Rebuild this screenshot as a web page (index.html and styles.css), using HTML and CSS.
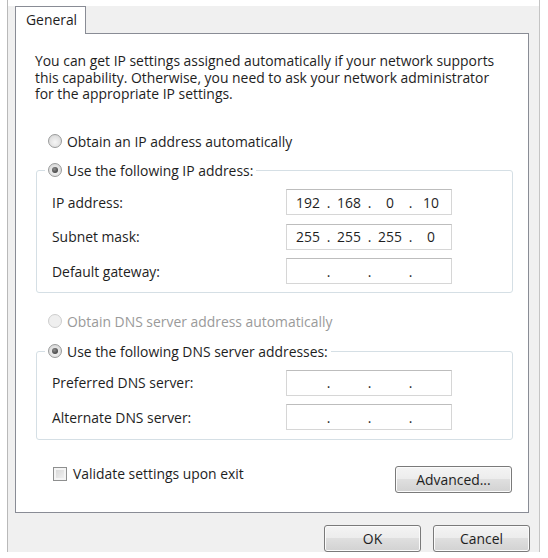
FILE: index.html
```html
<!DOCTYPE html>
<html lang="en">
<head>
    <meta charset="UTF-8">
    <meta name="viewport" content="width=device-width, initial-scale=1.0">
    <title>Internet Protocol Version 4 (TCP/IPv4) Properties</title>
    <link rel="stylesheet" href="styles.css">
</head>
<body>

    <div class="window">
        <div class="tabs">
            <div class="tab">General</div>
        </div>

        <div class="panel">
            <p class="intro">You can get IP settings assigned automatically if your network supports<br>this capability. Otherwise, you need to ask your network administrator<br>for the appropriate IP settings.</p>

            <label class="option outside"><input type="radio" name="ip" class="radio"><span>Obtain an IP address automatically</span></label>

            <fieldset class="group firstGroup">
                <legend><label class="option"><input type="radio" name="ip" class="radio" checked><span>Use the following IP address:</span></label></legend>
                <div class="row">
                    <span class="rowLabel">IP address:</span>
                    <div class="ipBox"><span>192</span><i>.</i><span>168</span><i>.</i><span>0</span><i>.</i><span>10</span></div>
                </div>
                <div class="row">
                    <span class="rowLabel">Subnet mask:</span>
                    <div class="ipBox"><span>255</span><i>.</i><span>255</span><i>.</i><span>255</span><i>.</i><span>0</span></div>
                </div>
                <div class="row">
                    <span class="rowLabel">Default gateway:</span>
                    <div class="ipBox"><span></span><i>.</i><span></span><i>.</i><span></span><i>.</i><span></span></div>
                </div>
            </fieldset>

            <label class="option outside disabledOption"><input type="radio" name="dns" class="radio" disabled><span>Obtain DNS server address automatically</span></label>

            <fieldset class="group secondGroup">
                <legend><label class="option"><input type="radio" name="dns" class="radio" checked><span>Use the following DNS server addresses:</span></label></legend>
                <div class="row">
                    <span class="rowLabel">Preferred DNS server:</span>
                    <div class="ipBox"><span></span><i>.</i><span></span><i>.</i><span></span><i>.</i><span></span></div>
                </div>
                <div class="row">
                    <span class="rowLabel">Alternate DNS server:</span>
                    <div class="ipBox"><span></span><i>.</i><span></span><i>.</i><span></span><i>.</i><span></span></div>
                </div>
            </fieldset>

            <div class="bottomRow">
                <label class="checkLabel"><input type="checkbox" class="checkbox"><span>Validate settings upon exit</span></label>
                <button type="button" class="button advancedButton">Advanced...</button>
            </div>
        </div>

        <div class="footer">
            <button type="button" class="button">OK</button>
            <button type="button" class="button">Cancel</button>
        </div>
    </div>

</body>
</html>
```

FILE: styles.css
```css
body {
    margin: 0;
    background-color: #fff;
    font-family: "Open Sans", "Noto Sans", sans-serif;
    font-size: 13.9px;
    color: #1e1e1e;
}

.window {
    width: 533px;
    height: 552px;
    margin-left: 7px;
    padding-top: 6px;
    box-sizing: border-box;
    border-left: 1px solid #b9b9b9;
    border-right: 1px solid #c4c4c4;
    background: linear-gradient(#fff 6px, #f0f0f0 6px);
}

.tabs {
    height: 27px;
    padding-left: 7px;
}

.tab {
    position: relative;
    z-index: 1;
    width: 71px;
    height: 28px;
    box-sizing: border-box;
    padding-left: 10px;
    line-height: 26px;
    background-color: #fff;
    border: 1px solid #898c95;
    border-bottom: none;
}

.panel {
    width: 514px;
    height: 480px;
    margin-left: 7px;
    padding: 19px 15px 0 19px;
    box-sizing: border-box;
    background-color: #fff;
    border: 1px solid #898c95;
}

.intro {
    margin: 0;
    line-height: 16.5px;
    white-space: nowrap;
}

/* radio + text */
.option {
    display: flex;
    align-items: center;
    gap: 5px;
    height: 19px;
    line-height: 19px;
    white-space: nowrap;
}

.outside {
    margin: 29px 0 0 13px;
}

.disabledOption {
    margin-top: 18.5px;
    color: #9a9a9a;
}

.radio {
    -webkit-appearance: none;
    appearance: none;
    width: 14px;
    height: 14px;
    margin: 0;
    border: 1px solid #9a9b9b;
    border-radius: 50%;
    background: radial-gradient(circle at 50% 60%, #f6f6f6 0, #e2e2e2 55%, #cfcfcf 100%);
    position: relative;
    flex: none;
}

.radio:checked::before {
    content: '';
    position: absolute;
    top: 3px;
    left: 3px;
    width: 6px;
    height: 6px;
    border-radius: 50%;
    background: radial-gradient(circle at 40% 35%, #8c8c8c, #2e2e2e);
}

.radio:disabled {
    border-color: #cdcdcd;
    background: #efefef;
}

/* group boxes */
.group {
    margin: 10px 0 0 1px;
    padding: 9.5px 0 8px 8px;
    min-width: 0;
    border: 1px solid #d5dfe5;
    border-radius: 3px;
}

.secondGroup {
    margin-top: 11px;
    padding-top: 9px;
    padding-bottom: 9px;
}

.group legend {
    padding: 0 3px;
}

.row {
    display: flex;
    align-items: center;
    height: 26px;
    margin-left: 7px;
}

.row + .row {
    margin-top: 8.5px;
}

.rowLabel {
    width: 234px;
}

.ipBox {
    display: flex;
    align-items: center;
    width: 166px;
    height: 26px;
    padding-left: 4px;
    box-sizing: border-box;
    border: 1px solid #d6d6d6;
    border-top-color: #bdbdbd;
}

.ipBox span {
    width: 34px;
    text-align: center;
}

.ipBox i {
    width: 7px;
    font-style: normal;
    text-align: center;
}

/* checkbox and advanced */
.bottomRow {
    display: flex;
    justify-content: space-between;
    align-items: flex-start;
    margin-top: 24px;
}

.checkLabel {
    display: flex;
    align-items: center;
    gap: 6px;
    height: 19px;
    margin-left: 18px;
}

.checkbox {
    -webkit-appearance: none;
    appearance: none;
    width: 14px;
    height: 14px;
    margin: 0;
    border: 1px solid #8e8f8f;
    background: linear-gradient(135deg, #d4d4d4, #f4f4f4);
    box-shadow: inset 0 0 0 2px #f4f4f4;
}

.button {
    width: 97px;
    height: 27px;
    padding: 0;
    font-family: inherit;
    font-size: inherit;
    color: #1e1e1e;
    border: 1px solid #7a7a7a;
    border-radius: 3px;
    background: linear-gradient(#f4f4f4 0, #ececec 50%, #dfdfdf 50%, #d2d2d2 100%);
    box-shadow: inset 0 0 0 1px #fbfbfb;
}

.advancedButton {
    width: 117px;
    margin: 2px 1px 0 0;
}

.footer {
    display: flex;
    justify-content: flex-end;
    gap: 12px;
    margin-top: 12px;
    padding-right: 9px;
}
```
